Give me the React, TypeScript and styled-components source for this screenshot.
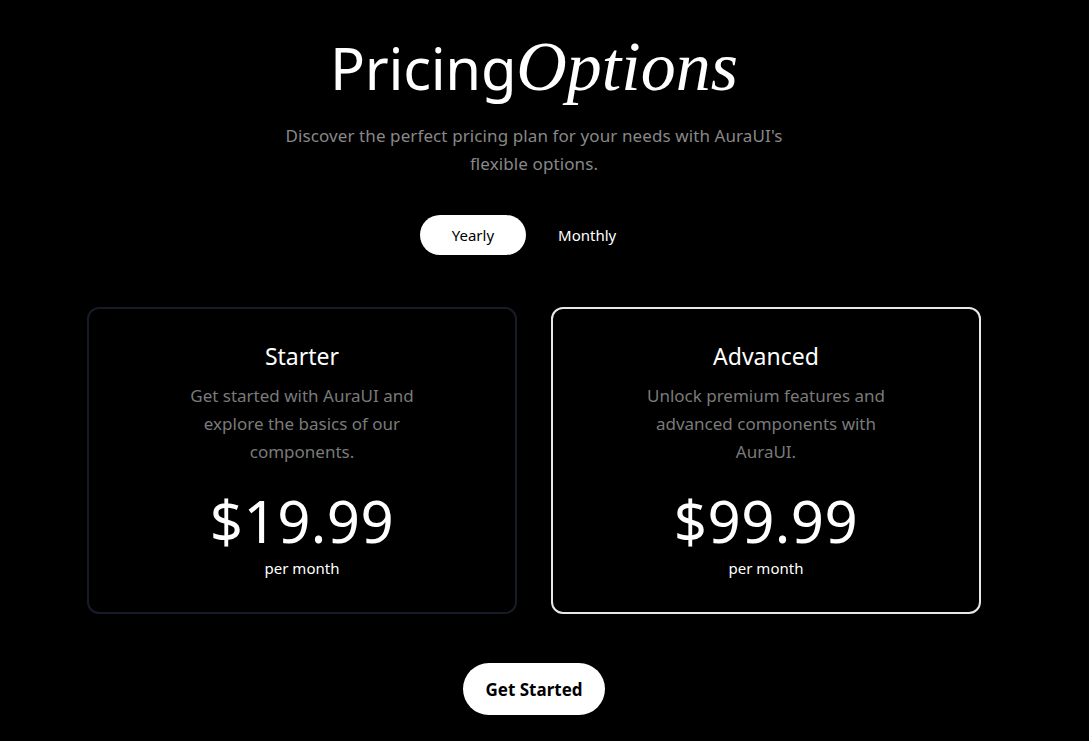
import React, { useState } from 'react';
import styled, { createGlobalStyle } from 'styled-components';

const GlobalStyle = createGlobalStyle`
  html, body {
    margin: 0;
    padding: 0;
    background: #000;
  }
  body {
    font-family: 'Noto Sans', 'Open Sans', sans-serif;
    color: #fff;
  }
`;

const Page = styled.main`
  width: 1068px;
  display: flex;
  flex-direction: column;
  align-items: center;
  padding-top: 22px;
`;

const Title = styled.h1`
  margin: 0;
  font-size: 58px;
  line-height: 92px;
  font-weight: 400;
  letter-spacing: -0.3px;
`;

const TitleAccent = styled.span`
  font-family: 'Liberation Serif', 'DejaVu Serif', serif;
  font-style: italic;
  font-size: 70px;
  line-height: 80px;
  letter-spacing: 0;
`;

const Subtitle = styled.p`
  margin: 8px 0 0;
  max-width: 540px;
  text-align: center;
  font-size: 17px;
  line-height: 28px;
  letter-spacing: 0.1px;
  color: #888;
`;

const Toggle = styled.div`
  display: flex;
  align-items: center;
  margin-top: 37px;
`;

const ToggleButton = styled.button<{ $active: boolean }>`
  height: 40px;
  padding: 0 32px;
  border: none;
  border-radius: 20px;
  font-family: inherit;
  font-size: 15px;
  cursor: pointer;
  background: ${(p) => (p.$active ? '#fff' : 'transparent')};
  color: ${(p) => (p.$active ? '#000' : '#fff')};
`;

const Cards = styled.section`
  display: grid;
  grid-template-columns: 430px 430px;
  gap: 34px;
  margin-top: 52px;
`;

const Card = styled.article<{ $featured?: boolean }>`
  height: 307px;
  box-sizing: border-box;
  display: flex;
  flex-direction: column;
  align-items: center;
  padding-top: 31px;
  border-radius: 12px;
  border: ${(p) => (p.$featured ? '2px solid #e8e8e8' : '2px solid #161b27')};
  text-align: center;
`;

const CardTitle = styled.h2`
  margin: 0;
  font-size: 23px;
  line-height: 32px;
  font-weight: 400;
`;

const CardText = styled.p`
  margin: 10px 0 0;
  max-width: 252px;
  font-size: 17px;
  line-height: 28px;
  color: #7a7a7a;
`;

const Price = styled.div`
  margin-top: 20px;
  font-size: 58px;
  line-height: 70px;
  letter-spacing: 0.5px;
`;

const Period = styled.div`
  font-size: 15px;
  line-height: 22px;
  margin-top: 1px;
`;

const CTA = styled.button`
  margin-top: 49px;
  height: 52px;
  padding: 0 22px;
  border: none;
  border-radius: 26px;
  background: #fff;
  color: #000;
  font-family: inherit;
  font-size: 17px;
  font-weight: 700;
  cursor: pointer;
`;

const plans = [
  {
    name: 'Starter',
    text: 'Get started with AuraUI and explore the basics of our components.',
    price: '$19.99',
  },
  {
    name: 'Advanced',
    text: 'Unlock premium features and advanced components with AuraUI.',
    price: '$99.99',
    featured: true,
  },
];

export default function App() {
  const [period, setPeriod] = useState<'yearly' | 'monthly'>('yearly');
  return (
    <>
      <GlobalStyle />
      <Page>
        <Title>
          Pricing<TitleAccent>Options</TitleAccent>
        </Title>
        <Subtitle>
          Discover the perfect pricing plan for your needs with AuraUI's flexible options.
        </Subtitle>
        <Toggle>
          <ToggleButton $active={period === 'yearly'} onClick={() => setPeriod('yearly')}>
            Yearly
          </ToggleButton>
          <ToggleButton $active={period === 'monthly'} onClick={() => setPeriod('monthly')}>
            Monthly
          </ToggleButton>
        </Toggle>
        <Cards>
          {plans.map((plan) => (
            <Card key={plan.name} $featured={plan.featured}>
              <CardTitle>{plan.name}</CardTitle>
              <CardText>{plan.text}</CardText>
              <Price>{plan.price}</Price>
              <Period>per month</Period>
            </Card>
          ))}
        </Cards>
        <CTA>Get Started</CTA>
      </Page>
    </>
  );
}
